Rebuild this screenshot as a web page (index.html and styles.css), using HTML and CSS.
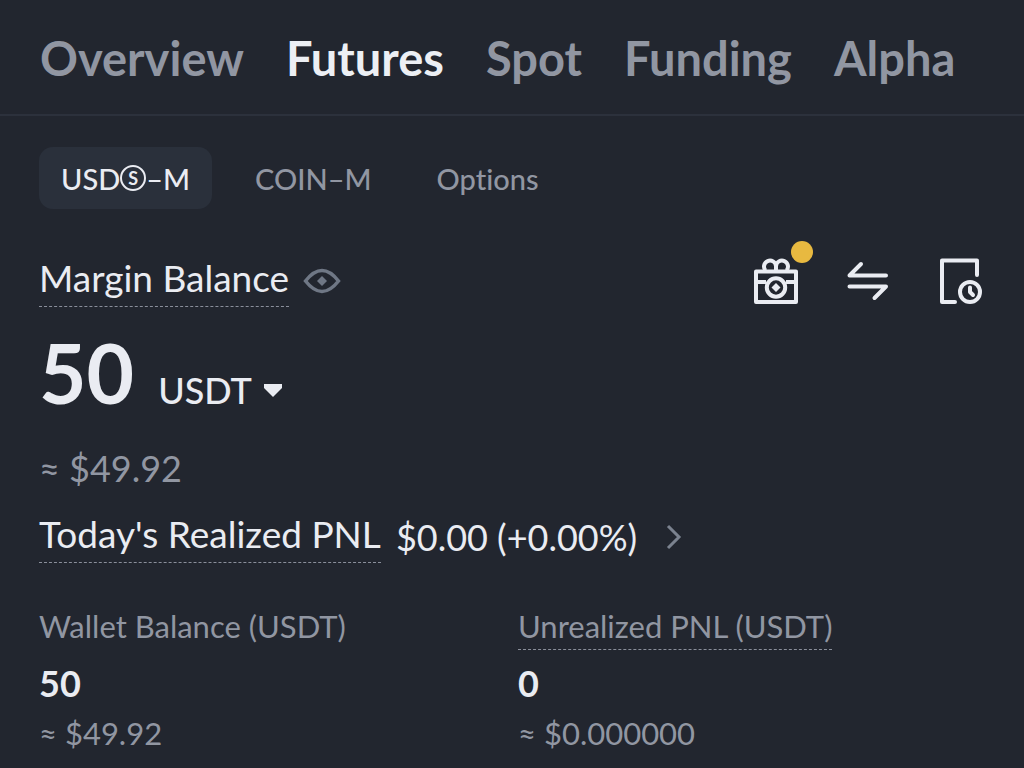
FILE: index.html
```html
<!DOCTYPE html>
<html lang="en">
<head>
    <meta charset="UTF-8">
    <meta name="viewport" content="width=device-width, initial-scale=1.0">
    <title>Futures Wallet</title>
    <link rel="stylesheet" href="styles.css">
</head>
<body>
    <nav class="main-nav">
        <a href="#overview">Overview</a>
        <a href="#futures" class="active">Futures</a>
        <a href="#spot">Spot</a>
        <a href="#funding">Funding</a>
        <a href="#alpha">Alpha</a>
    </nav>

    <main class="content">
        <div class="tabs">
            <button type="button" class="tab active">USD<span class="coin">S</span>–M</button>
            <button type="button" class="tab">COIN–M</button>
            <button type="button" class="tab">Options</button>
        </div>

        <div class="balance-header">
            <div class="balance-title">
                <span class="hint">Margin Balance</span>
                <button type="button" class="icon-btn" aria-label="Hide balance">
                    <svg width="38" height="28" viewBox="0 0 38 28" fill="none">
                        <path d="M2.500 14C8 7 12.500 3.500 19 3.500S30 7 35.500 14C30 21 25.500 24.500 19 24.500S8 21 2.500 14Z" stroke="#6f7785" stroke-width="3.500"/>
                        <path d="M19 9l5 5-5 5-5-5z" fill="#6f7785"/>
                    </svg>
                </button>
            </div>
            <div class="actions">
                <button type="button" class="icon-btn gift" aria-label="Rewards">
                    <svg width="48" height="48" viewBox="0 0 48 48" fill="none" stroke="#eaecf2" stroke-width="4" stroke-linejoin="round">
                        <path d="M3 14.500h40v30.500H3zM3 25h10M33 25h10"/>
                        <path d="M23 14.500V9a6 6 0 1 0-10.500 4.500M23 14.500V9a6 6 0 1 1 10.500 4.500"/>
                        <circle cx="23" cy="30.500" r="9.200"/>
                        <path d="M23 26l4.500 4.500-4.500 4.500-4.500-4.500z" fill="#eaecf2" stroke="none"/>
                    </svg>
                    <span class="dot"></span>
                </button>
                <button type="button" class="icon-btn" aria-label="Transfer">
                    <svg width="48" height="48" viewBox="0 0 48 48" fill="none" stroke="#eaecf2" stroke-width="4" stroke-linecap="round" stroke-linejoin="round">
                        <path d="M41 18.500H4.500L16 7M4.500 29.500H41L29.500 41"/>
                    </svg>
                </button>
                <button type="button" class="icon-btn" aria-label="History">
                    <svg width="48" height="48" viewBox="0 0 48 48" fill="none" stroke="#eaecf2" stroke-width="4" stroke-linecap="round" stroke-linejoin="round">
                        <path d="M40 18V3.500H5V45h13"/>
                        <circle cx="33" cy="35" r="10"/>
                        <path d="M33 30.500v4.500l3 3"/>
                    </svg>
                </button>
            </div>
        </div>

        <div class="total">
            <span class="total-value">50</span>
            <button type="button" class="currency">
                USDT
                <svg width="18" height="13" viewBox="0 0 18 13"><path d="M0 0h18v4l-9 9-9-9z" fill="#eaecf2"/></svg>
            </button>
        </div>
        <p class="approx approx-total">≈ $49.92</p>

        <a href="#pnl" class="pnl">
            <span class="hint">Today's Realized PNL</span>
            <span class="pnl-value">$0.00 (+0.00%)</span>
            <svg width="18" height="28" viewBox="0 0 18 28" fill="none"><path d="M4 3l11 11L4 25" stroke="#7b828f" stroke-width="3"/></svg>
        </a>

        <div class="stats">
            <div>
                <p class="stat-label"><span>Wallet Balance (USDT)</span></p>
                <p class="stat-value">50</p>
                <p class="approx">≈ $49.92</p>
            </div>
            <div>
                <p class="stat-label"><span class="hint">Unrealized PNL (USDT)</span></p>
                <p class="stat-value">0</p>
                <p class="approx">≈ $0.000000</p>
            </div>
        </div>
    </main>
</body>
</html>
```
FILE: styles.css
```css
* {
    box-sizing: border-box;
    margin: 0;
    padding: 0;
}

body {
    font-family: Lato, 'Open Sans', sans-serif;
    font-variant-ligatures: none;
    background-color: #22262f;
    color: #eaecf2;
}

a {
    color: inherit;
    text-decoration: none;
}

button {
    background: none;
    border: none;
    color: inherit;
    font-family: inherit;
    font-variant-ligatures: inherit;
    cursor: pointer;
}

svg {
    display: block;
}

.main-nav {
    display: flex;
    gap: 42px;
    padding: 26px 40px 24px;
    border-bottom: 2px solid #2c313c;
    font-size: 47px;
    line-height: 64px;
    font-weight: 700;
    color: #9196a2;
}

.main-nav .active {
    color: #eceff4;
}

.content {
    padding: 31px 39px 0;
}

.tabs {
    display: flex;
    gap: 21px;
}

.tab {
    display: flex;
    align-items: center;
    height: 62px;
    padding: 0 22px;
    border-radius: 14px;
    font-size: 29px;
    font-weight: 500;
    color: #9196a2;
}

.tab.active {
    background-color: #2a303b;
    color: #eaecf2;
}

.coin {
    display: flex;
    align-items: center;
    justify-content: center;
    width: 26px;
    height: 26px;
    border: 2px solid;
    border-radius: 50%;
    font-size: 18px;
    line-height: 22px;
    font-weight: 700;
}

.hint {
    padding-bottom: 4px;
    border-bottom: 1px dashed #8a8f9b;
}

.balance-header {
    display: flex;
    justify-content: space-between;
    margin-top: 45px;
}

.balance-title {
    display: flex;
    align-items: center;
    gap: 14px;
    font-size: 37px;
    line-height: 48px;
}

.actions {
    display: flex;
    align-items: center;
    gap: 44px;
}

.gift {
    position: relative;
}

.dot {
    position: absolute;
    top: -16px;
    right: -12px;
    width: 22px;
    height: 22px;
    border-radius: 50%;
    background-color: #e8b940;
}

.total {
    display: flex;
    align-items: baseline;
    gap: 24px;
    margin-top: 17px;
}

.total-value {
    font-size: 82px;
    line-height: 96px;
    font-weight: 700;
}

.currency {
    display: flex;
    align-items: center;
    gap: 12px;
    font-size: 36px;
    font-weight: 500;
}

.approx {
    font-size: 31px;
    line-height: 40px;
    color: #9196a2;
}

.approx-total {
    margin-top: 24px;
    font-size: 36px;
    line-height: 48px;
}

.pnl {
    display: flex;
    align-items: center;
    gap: 15px;
    margin-top: 18px;
    font-size: 37px;
    line-height: 48px;
}

.pnl-value {
    font-size: 36px;
}

.pnl svg {
    margin-left: 12px;
}

.stats {
    display: grid;
    grid-template-columns: 1fr 1fr;
    gap: 12px;
    margin-top: 44px;
}

.stat-label {
    display: flex;
    height: 43px;
    font-size: 31px;
    line-height: 38px;
    color: #9196a2;
}

.stat-value {
    margin: 11px 0 8px;
    font-size: 36px;
    line-height: 44px;
    font-weight: 700;
}
```
